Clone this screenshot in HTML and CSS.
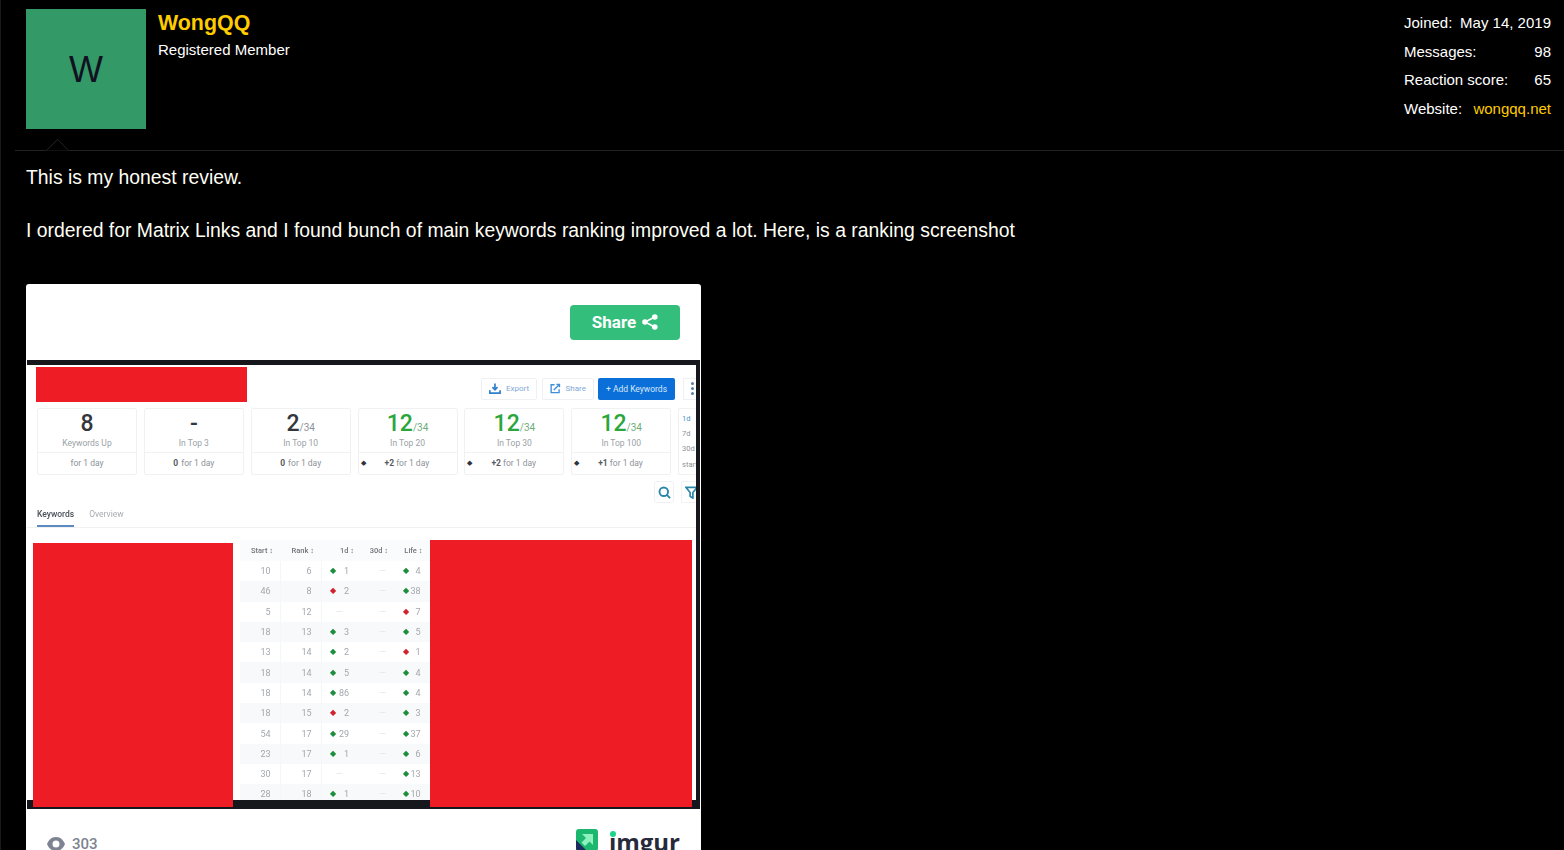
FILE: index.html
```html
<!DOCTYPE html>
<html lang="en">
  <head>
    <meta charset="UTF-8" />
    <meta name="viewport" content="width=device-width, initial-scale=1" />
    <title>WongQQ - Review</title>
    <link rel="stylesheet" href="styles.css">
  </head>
  <body>
    <div class="post">
      <header class="post-user">
        <div class="avatar">W</div>
        <div class="user-info">
          <a class="username" href="#">WongQQ</a>
          <div class="user-title">Registered Member</div>
        </div>
        <dl class="user-stats">
          <div class="stat-row"><dt>Joined:</dt><dd>May 14, 2019</dd></div>
          <div class="stat-row"><dt>Messages:</dt><dd>98</dd></div>
          <div class="stat-row"><dt>Reaction score:</dt><dd>65</dd></div>
          <div class="stat-row"><dt>Website:</dt><dd><a href="#">wongqq.net</a></dd></div>
        </dl>
        <span class="user-arrow"></span>
      </header>

      <div class="post-body">
        <p class="post-text">This is my honest review.<br><br>I ordered for Matrix Links and I found bunch of main keywords ranking improved a lot. Here, is a ranking screenshot</p>

        <div class="embed">
          <div class="embed-top">
            <button class="share-btn">Share
              <svg viewBox="0 0 16 16" width="16" height="16"><circle cx="12.8" cy="3" r="2.8"/><circle cx="12.8" cy="13" r="2.8"/><circle cx="3" cy="8" r="2.8"/><path d="M12.8 3 3 8l9.8 5" fill="none" stroke="#fff" stroke-width="1.7"/></svg>
            </button>
          </div>

          <div class="shot">
            <div class="shot-inner">
              <div class="shot-toolbar">
                <div class="redact redact-title"></div>
                <div class="tool-btn tool-export">
                  <svg viewBox="0 0 14 14" width="13" height="13"><path d="M7 1v7M4 5.500 7 8.500l3-3" fill="none" stroke="#2f7fc9" stroke-width="2"/><path d="M1 9v3.500h12V9" fill="none" stroke="#2f7fc9" stroke-width="2"/></svg>
                  Export
                </div>
                <div class="tool-btn tool-share">
                  <svg viewBox="0 0 14 14" width="13" height="13"><path d="M6 2H1.500v10.500H12V8" fill="none" stroke="#3f8fd8" stroke-width="1.800"/><path d="M5 9 12 2M8.500 1.500h4v4" fill="none" stroke="#3f8fd8" stroke-width="1.800"/></svg>
                  Share
                </div>
                <div class="add-btn">+ Add Keywords</div>
                <div class="more-btn"><i></i><i></i><i></i></div>
              </div>

              <div class="cards">
                <div class="card"><div class="card-num">8</div><div class="card-label">Keywords Up</div><div class="card-foot">for 1 day</div></div>
                <div class="card"><div class="card-num">-</div><div class="card-label">In Top 3</div><div class="card-foot"><b>0</b> for 1 day</div></div>
                <div class="card"><div class="card-num">2<small>/34</small></div><div class="card-label">In Top 10</div><div class="card-foot"><b>0</b> for 1 day</div></div>
                <div class="card up"><div class="card-num">12<small>/34</small></div><div class="card-label">In Top 20</div><div class="card-foot"><span class="dot">&#9670;</span><span><b>+2</b> for 1 day</span></div></div>
                <div class="card up"><div class="card-num">12<small>/34</small></div><div class="card-label">In Top 30</div><div class="card-foot"><span class="dot">&#9670;</span><span><b>+2</b> for 1 day</span></div></div>
                <div class="card up"><div class="card-num">12<small>/34</small></div><div class="card-label">In Top 100</div><div class="card-foot"><span class="dot">&#9670;</span><span><b>+1</b> for 1 day</span></div></div>
                <div class="card range"><span class="on">1d</span><span>7d</span><span>30d</span><span>start</span></div>
              </div>

              <div class="icon-row">
                <div class="icon-btn"><svg viewBox="0 0 14 14" width="13" height="13"><circle cx="6.200" cy="6.200" r="4.600" fill="none" stroke="#2a86a8" stroke-width="2"/><path d="m9.500 9.500 3.500 3.500" stroke="#2a86a8" stroke-width="2"/></svg></div>
                <div class="icon-btn"><svg viewBox="0 0 14 14" width="13" height="13"><path d="M1 1.500h12L8.500 7v6L5.500 11V7z" fill="none" stroke="#2a86a8" stroke-width="1.800"/></svg></div>
              </div>

              <div class="tabs"><span class="tab active">Keywords</span><span class="tab">Overview</span></div>

              <div class="table-area">
                <div class="redact redact-left"></div>
                <div class="table-wrap">
                  <table class="rank-table">
                    <thead>
                      <tr><th>Start &#8597;</th><th>Rank &#8597;</th><th>1d &#8597;</th><th>30d &#8597;</th><th>Life &#8597;</th></tr>
                    </thead>
                    <tbody>
                      <tr><td>10</td><td>6</td><td><i class="g">&#9670;</i>1</td><td>—</td><td><i class="g">&#9670;</i>4</td></tr>
                      <tr><td>46</td><td>8</td><td><i class="r">&#9670;</i>2</td><td>—</td><td><i class="g">&#9670;</i>38</td></tr>
                      <tr><td>5</td><td>12</td><td class="dash">—</td><td>—</td><td><i class="r">&#9670;</i>7</td></tr>
                      <tr><td>18</td><td>13</td><td><i class="g">&#9670;</i>3</td><td>—</td><td><i class="g">&#9670;</i>5</td></tr>
                      <tr><td>13</td><td>14</td><td><i class="g">&#9670;</i>2</td><td>—</td><td><i class="r">&#9670;</i>1</td></tr>
                      <tr><td>18</td><td>14</td><td><i class="g">&#9670;</i>5</td><td>—</td><td><i class="g">&#9670;</i>4</td></tr>
                      <tr><td>18</td><td>14</td><td><i class="g">&#9670;</i>86</td><td>—</td><td><i class="g">&#9670;</i>4</td></tr>
                      <tr><td>18</td><td>15</td><td><i class="r">&#9670;</i>2</td><td>—</td><td><i class="g">&#9670;</i>3</td></tr>
                      <tr><td>54</td><td>17</td><td><i class="g">&#9670;</i>29</td><td>—</td><td><i class="g">&#9670;</i>37</td></tr>
                      <tr><td>23</td><td>17</td><td><i class="g">&#9670;</i>1</td><td>—</td><td><i class="g">&#9670;</i>6</td></tr>
                      <tr><td>30</td><td>17</td><td class="dash">—</td><td>—</td><td><i class="g">&#9670;</i>13</td></tr>
                      <tr><td>28</td><td>18</td><td><i class="g">&#9670;</i>1</td><td>—</td><td><i class="g">&#9670;</i>10</td></tr>
                    </tbody>
                  </table>
                </div>
                <div class="redact redact-right"></div>
              </div>
            </div>
          </div>

          <div class="embed-foot">
            <div class="views">
              <svg viewBox="0 0 18 14" width="18" height="14"><path fill-rule="evenodd" d="M9 0c5 0 7.500 3.500 9 7-1.500 3.500-4 7-9 7S1.500 10.500 0 7c1.500-3.500 4-7 9-7zm0 3.500a3.500 3.500 0 1 0 0 7 3.500 3.500 0 0 0 0-7z"/></svg>
              303
            </div>
            <div class="imgur-logo">
              <svg viewBox="0 0 22 22" width="22" height="22"><rect width="22" height="22" rx="3" fill="#1bb76e"/><path d="M0 11 11 22H3a3 3 0 0 1-3-3z" fill="#1d2a5e"/><path d="M6 5h11v11l-3.500-3.500-4.500 4.500-3.500-3.500 4.500-4.500z" fill="#8ef0bd"/></svg>
              <span class="imgur-text">imgur</span>
            </div>
          </div>
        </div>
      </div>
    </div>
  </body>
</html>
```

FILE: styles.css
```css
:root {
  --gold: #fc0;
  --line: #222;
  --red: #ee1c25;
  --green: #2aa63c;
  --muted: #9a9fa6;
}
html,
body {
  height: 100%;
  overflow: hidden;
}
body {
  background: #000;
  color: #fff;
  font-family: "Liberation Sans", Arial, sans-serif;
  margin: 0;
  border-left: 1px solid #1a1a1a;
}
a {
  color: var(--gold);
  text-decoration: none;
}
.post {
  margin-left: 14px;
}
.post-user {
  position: relative;
  display: flex;
  height: 151px;
  padding: 9px 13px 0 11px;
  box-sizing: border-box;
  border-bottom: 1px solid var(--line);
}
.avatar {
  width: 120px;
  height: 120px;
  background: #339966;
  color: #112;
  font-size: 36px;
  line-height: 122px;
  text-align: center;
  flex-shrink: 0;
}
.user-info {
  margin-left: 12px;
  flex: 1;
}
.username {
  display: block;
  font-size: 21.400px;
  font-weight: bold;
  line-height: 28px;
}
.user-title {
  font-size: 15px;
  line-height: 17px;
  margin-top: 4px;
}
.user-stats {
  margin: 5px 0 0;
  width: 147px;
  font-size: 15px;
}
.stat-row {
  display: flex;
  justify-content: space-between;
  height: 28.600px;
  line-height: 18px;
}
.stat-row dd {
  margin: 0;
}
.user-arrow {
  position: absolute;
  left: 34px;
  bottom: -1px;
  width: 16px;
  height: 16px;
  border: 1px solid var(--line);
  border-right: 0;
  border-bottom: 0;
  background: #000;
  transform: translateY(8px) rotate(45deg);
  clip-path: polygon(0 0, 100% 0, 0 100%);
}
.post-body {
  padding: 13px 0 0 11px;
}
.post-text {
  margin: 0;
  font-size: 19.380px;
  line-height: 26.500px;
  color: #fffef5;
}
.embed {
  width: 675px;
  margin-top: 40.500px;
  background: #fff;
  border-radius: 3px 3px 0 0;
}
.embed-top {
  display: flex;
  justify-content: flex-end;
  height: 76px;
  padding: 21px 21px 0 0;
  box-sizing: border-box;
}
.share-btn {
  display: flex;
  align-items: center;
  justify-content: center;
  gap: 6px;
  width: 110px;
  height: 35px;
  padding: 0 0 2px;
  background: #33be7c;
  color: #fff;
  border: none;
  border-radius: 4px;
  font-family: Roboto, sans-serif;
  font-size: 17px;
  font-weight: 700;
}
.share-btn svg {
  fill: #fff;
}
.shot {
  margin-left: 1px;
  width: 673px;
  height: 449px;
  background: #16171d;
  padding: 5px 4px 9px 0;
  box-sizing: border-box;
}
.shot-inner {
  height: 100%;
  background: #fff;
  color: #8d9299;
  font-family: Roboto, sans-serif;
  filter: blur(0.45px);
}
.shot-toolbar {
  display: flex;
  align-items: center;
  height: 43px;
  padding: 4px 0 0 9px;
  box-sizing: border-box;
  font-size: 8px;
  overflow: hidden;
}
.redact {
  background: var(--red);
  flex-shrink: 0;
}
.redact-title {
  width: 211px;
  height: 35px;
  margin-right: 234px;
  margin-top: -8px;
}
.tool-btn {
  display: flex;
  align-items: center;
  flex-shrink: 0;
  gap: 5px;
  height: 22px;
  padding: 0 7px;
  border: 1px solid #eef0f3;
  border-radius: 2px;
  color: #7fa9d6;
  box-sizing: border-box;
}
.tool-export {
  width: 56px;
  margin-right: 5px;
}
.tool-share {
  width: 52px;
  margin-right: 4px;
}
.add-btn {
  flex: 0 0 77px;
  height: 22px;
  line-height: 22px;
  text-align: center;
  background: #0a6fd8;
  color: #d7e8fa;
  border-radius: 2px;
  font-size: 8.500px;
}
.more-btn {
  display: flex;
  flex-direction: column;
  justify-content: center;
  flex: 0 0 13px;
  gap: 2px;
  height: 22px;
  margin-left: 8px;
  padding-left: 7px;
  border: 1px solid #eef0f3;
  border-right: 0;
  box-sizing: border-box;
}
.more-btn i {
  width: 3px;
  height: 3px;
  border-radius: 50%;
  background: #5b7fa6;
}
.cards {
  display: flex;
  gap: 6.850px;
  padding-left: 10px;
  height: 67px;
  overflow: hidden;
}
.card {
  flex: 0 0 100px;
  border: 1px solid #f0f1f3;
  border-radius: 2px;
  box-sizing: border-box;
  text-align: center;
}
.card-num {
  font-size: 23px;
  font-weight: 500;
  line-height: 30px;
  color: #33373d;
}
.card-num small {
  font-size: 10px;
  font-weight: 400;
  line-height: 0;
  color: #8d9299;
}
.up .card-num {
  color: var(--green);
}
.up .card-num small {
  color: #6fae7a;
}
.card-label {
  font-size: 8.500px;
  line-height: 10px;
  margin: -1px 0 4px;
  color: var(--muted);
}
.card-foot {
  display: flex;
  justify-content: center;
  height: 21px;
  border-top: 1px solid #f0f1f3;
  font-size: 8.500px;
  line-height: 21px;
  gap: 3px;
}
.card-foot b {
  color: #555a60;
}
.up .card-foot {
  justify-content: flex-start;
  padding-left: 2px;
  gap: 19px;
}
.dot {
  color: #30343a;
  font-size: 7px;
}
.range {
  flex: 1;
  display: flex;
  flex-direction: column;
  gap: 5.200px;
  padding: 5px 0 0 3px;
  text-align: left;
  font-size: 7.500px;
  line-height: 10px;
  overflow: hidden;
  border-right: 0;
  white-space: nowrap;
}
.range .on {
  color: #4a90c9;
}
.icon-row {
  display: flex;
  justify-content: flex-end;
  gap: 7px;
  height: 22px;
  margin-top: 6px;
  overflow: hidden;
}
.icon-btn {
  flex: 0 0 20px;
  height: 22px;
  display: flex;
  align-items: center;
  justify-content: center;
  border: 1px solid #f0f1f3;
  border-radius: 2px;
  box-sizing: border-box;
}
.icon-btn:last-child {
  flex-basis: 15px;
  justify-content: flex-start;
  padding-left: 3px;
  border-right: 0;
  overflow: hidden;
}
.icon-btn svg {
  flex-shrink: 0;
}
.tabs {
  display: flex;
  gap: 15px;
  padding-left: 10px;
  height: 24px;
  border-bottom: 1px solid #f0f1f3;
  font-size: 8.500px;
  line-height: 22px;
  color: #a8acb2;
}
.tab {
  height: 24px;
  box-sizing: border-box;
}
.tab.active {
  color: #4a5058;
  font-weight: 500;
  border-bottom: 2px solid #5b8ac0;
}
.table-area {
  display: flex;
  align-items: flex-start;
  height: 260px;
  margin-top: 12px;
}
.redact-left {
  width: 200px;
  height: 264px;
  margin: 3px 0 0 6px;
}
.redact-right {
  width: 262px;
  height: 267px;
}
.table-wrap {
  flex: 0 0 190px;
  height: 260px;
  padding-left: 7px;
  overflow: hidden;
}
.rank-table {
  width: 190px;
  border-collapse: collapse;
  table-layout: fixed;
  font-size: 9px;
}
.rank-table th,
.rank-table td {
  box-sizing: border-box;
}
.rank-table th {
  height: 21px;
  padding: 0 7px 0 0;
  font-weight: 500;
  font-size: 7.500px;
  color: #70757c;
  background: #fafbfc;
  text-align: right;
  white-space: nowrap;
}
.rank-table th:nth-child(1) {
  width: 40px;
}
.rank-table th:nth-child(2) {
  width: 41px;
}
.rank-table th:nth-child(3) {
  width: 40px;
}
.rank-table th:nth-child(4) {
  width: 34px;
}
.rank-table td {
  height: 20.300px;
  padding: 0 9px 0 0;
  text-align: right;
  color: #a3a7ad;
  white-space: nowrap;
}
.rank-table td:nth-child(-n+2) {
  border-right: 1px solid #f5f6f7;
}
.rank-table tbody tr:nth-child(even) {
  background: #f8f9fa;
}
.rank-table td:nth-child(3) {
  padding: 0 12px 0 8px;
}
.rank-table td:nth-child(4) {
  padding-right: 9px;
  color: #e2e4e7;
}
.rank-table td:nth-child(5) {
  padding-left: 8px;
}
.rank-table td.dash {
  color: #e2e4e7;
  text-align: center;
}
.rank-table i {
  float: left;
  font-style: normal;
  font-size: 8px;
}
.g {
  color: #1d8f3c;
}
.r {
  color: #d2222d;
}
.embed-foot {
  display: flex;
  justify-content: space-between;
  padding: 20px 21px 0;
  height: 60px;
  box-sizing: border-box;
}
.views {
  display: flex;
  align-items: center;
  gap: 7px;
  height: 30px;
  color: #7d8390;
  font-family: Roboto, sans-serif;
  font-size: 15px;
  font-weight: 500;
}
.views svg {
  fill: #7d8390;
}
.imgur-logo {
  display: flex;
  align-items: flex-start;
  gap: 11px;
}
.imgur-text {
  position: relative;
  font-family: "Open Sans", sans-serif;
  font-size: 24px;
  font-weight: 700;
  line-height: 24px;
  margin-top: 1px;
  color: #272a3a;
}
.imgur-text::before {
  content: "";
  position: absolute;
  left: 1px;
  top: 1px;
  width: 6px;
  height: 6px;
  border-radius: 50%;
  background: #1bd68a;
}
```
